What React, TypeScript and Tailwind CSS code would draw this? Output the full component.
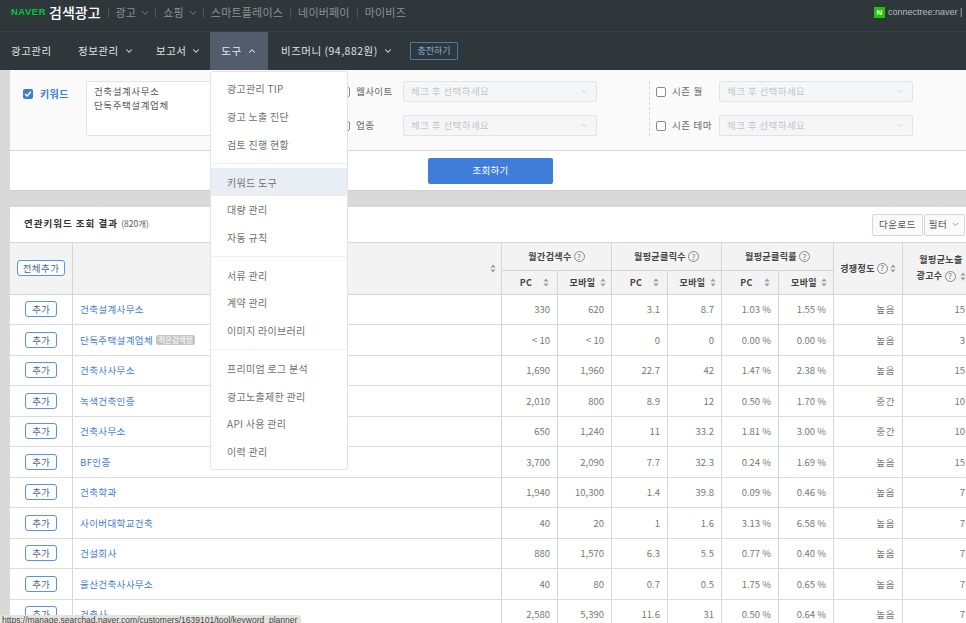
import React from "react";
import { ChevronDown, ChevronUp } from "lucide-react";

const font = { fontFamily: '"Noto Sans CJK KR","Liberation Sans",sans-serif' };

const cols = "grid grid-cols-[63px_429px_56px_54px_56px_54px_57px_55px_69px_80px]";

const rows: [string, string, string, string, string, string, string, string, string][] = [
  ["건축설계사무소", "330", "620", "3.1", "8.7", "1.03 %", "1.55 %", "높음", "15"],
  ["단독주택설계업체", "< 10", "< 10", "0", "0", "0.00 %", "0.00 %", "높음", "3"],
  ["건축사사무소", "1,690", "1,960", "22.7", "42", "1.47 %", "2.38 %", "높음", "15"],
  ["녹색건축인증", "2,010", "800", "8.9", "12", "0.50 %", "1.70 %", "중간", "10"],
  ["건축사무소", "650", "1,240", "11", "33.2", "1.81 %", "3.00 %", "중간", "10"],
  ["BF인증", "3,700", "2,090", "7.7", "32.3", "0.24 %", "1.69 %", "높음", "15"],
  ["건축학과", "1,940", "10,300", "1.4", "39.8", "0.09 %", "0.46 %", "높음", "7"],
  ["사이버대학교건축", "40", "20", "1", "1.6", "3.13 %", "6.58 %", "높음", "7"],
  ["건설회사", "880", "1,570", "6.3", "5.5", "0.77 %", "0.40 %", "높음", "7"],
  ["울산건축사사무소", "40", "80", "0.7", "0.5", "1.75 %", "0.65 %", "높음", "7"],
  ["건축사", "2,580", "5,390", "11.6", "31", "0.50 %", "0.64 %", "높음", "7"],
];

function Sort() {
  return (
    <svg width="6" height="9" viewBox="0 0 6 9" className="shrink-0">
      <path d="M3 0.5 L5.6 3.6 H0.4 Z M3 8.5 L0.4 5.4 H5.6 Z" fill="#9a9fa4" />
    </svg>
  );
}

function Help() {
  return (
    <span className="inline-flex h-[11px] w-[11px] shrink-0 items-center justify-center rounded-full border border-[#8a8a8a] text-[8px] leading-none font-normal text-[#777]">
      ?
    </span>
  );
}

function Check({ on }: { on?: boolean }) {
  return on ? (
    <span className="flex h-[10px] w-[10px] shrink-0 items-center justify-center rounded-[2px] bg-[#3f7ddb]">
      <svg width="8" height="8" viewBox="0 0 8 8">
        <path d="M1.2 4 L3.2 6 L6.8 1.8" stroke="#fff" strokeWidth="1.5" fill="none" />
      </svg>
    </span>
  ) : (
    <span className="h-[10px] w-[10px] shrink-0 rounded-[2px] border border-[#8a8a8a] bg-white" />
  );
}

function Select() {
  return (
    <div className="flex h-[21px] w-[194px] items-center justify-between rounded-[2px] border border-[#e2e3e5] bg-[#f5f6f7] px-[7px] text-[9.5px] tracking-[0.4px] text-[#c4c6c9]">
      <span>체크 후 선택하세요</span>
      <ChevronDown size={9} strokeWidth={1.5} className="text-[#b5b7ba]" />
    </div>
  );
}

function TopLink({ children, caret }: { children: React.ReactNode; caret?: boolean }) {
  return (
    <div className="flex items-center">
      <span className="mr-[7px] h-[10px] w-px bg-[#4a5255]" />
      <span className={`flex items-center gap-[4px] text-[11px] tracking-[0.2px] text-[#8b9194] ${caret ? "pr-[5px]" : "pr-[7px]"}`}>
        {children}
        {caret && <ChevronDown size={10} strokeWidth={2} className="text-[#8b9194]" />}
      </span>
    </div>
  );
}

function NavItem({ children, w, caret }: { children: React.ReactNode; w: string; caret?: boolean }) {
  return (
    <div className={`flex items-center gap-[5px] pb-[1px] text-[10.5px] tracking-[0.5px] text-[#dfe2e3] ${w}`}>
      {children}
      {caret && <ChevronDown size={10} strokeWidth={2.5} className="text-[#dfe2e3]" />}
    </div>
  );
}

function MenuGroup({ items, first, last }: { items: string[]; first?: boolean; last?: boolean }) {
  return (
    <div className={`${first ? "pt-[3.2px]" : "pt-[4.7px]"} ${last ? "pb-[4px]" : "border-b border-[#f0f0f0] pb-[4.7px]"}`}>
      {items.map((t) => (
        <div
          key={t}
          className={`flex h-[27.6px] items-center pl-[16px] text-[10px] tracking-[0.3px] text-[#707070] ${t === "키워드 도구" ? "bg-[#e9edf4]" : ""}`}
        >
          {t}
        </div>
      ))}
    </div>
  );
}

const th = "flex items-center justify-center gap-[2px] border-r border-b border-[#d6d6d6] text-[9px] font-bold tracking-[0.4px] text-[#444]";
const td = "flex items-center justify-end border-r border-[#d6d6d6] pr-[7px] text-[9.5px] text-[#777]";

export default function App() {
  return (
    <div className="relative h-[623px] w-[966px] overflow-hidden bg-[#d9d9d9]" style={font}>
      <header className="flex h-[32px] items-center justify-between border-b border-[#383f42] bg-[#2f373a] pb-[6px] pl-[11px]">
        <div className="flex items-center">
          <span className="w-[34px] whitespace-nowrap text-[9.5px] font-black tracking-[0.5px] text-[#00c73c]" style={{ fontFamily: '"Liberation Sans",sans-serif' }}>
            NAVER
          </span>
          <span className="ml-[4px] mr-[7px] text-[14px] font-medium text-white">검색광고</span>
          <TopLink caret>광고</TopLink>
          <TopLink caret>쇼핑</TopLink>
          <TopLink>스마트플레이스</TopLink>
          <TopLink>네이버페이</TopLink>
          <TopLink>마이비즈</TopLink>
        </div>
        <div className="flex items-center gap-[3px]">
          <span className="flex h-[11px] w-[11px] items-center justify-center bg-[#1ec800] text-[8px] font-black leading-none text-white" style={{ fontFamily: '"Liberation Sans",sans-serif' }}>
            N
          </span>
          <span className="w-[78px] whitespace-nowrap text-[9px] text-[#b9bdbf]" style={{ fontFamily: '"Liberation Sans",sans-serif' }}>
            connectree:naver |
          </span>
        </div>
      </header>

      <nav className="flex h-[38px] items-stretch bg-[#2f373a] pl-[11px]">
        <NavItem w="w-[67px]">광고관리</NavItem>
        <NavItem w="w-[78px]" caret>정보관리</NavItem>
        <NavItem w="w-[54px]" caret>보고서</NavItem>
        <div className="flex w-[58px] items-center justify-center gap-[5px] bg-[#525c6c] pb-[1px] text-[10.5px] tracking-[0.5px] text-[#e6e8ea]">
          도구
          <ChevronUp size={10} strokeWidth={2.5} />
        </div>
        <div className="ml-[13px] flex w-[129px] items-center">
          <NavItem w="" caret>비즈머니 (94,882원)</NavItem>
        </div>
        <div className="flex items-center">
          <span className="flex h-[18px] w-[48px] items-center justify-center rounded-[1px] border border-[#3f7fb0] text-[9px] text-[#7fb0d8]">
            충전하기
          </span>
        </div>
      </nav>

      <main className="ml-[10px]">
        <section className="flex h-[81px] items-start border-b border-[#d4d4d4] bg-[#fafafa] pt-[11px] pl-[13px]">
          <div className="flex items-center pt-[5px]">
            <Check on />
            <span className="ml-[7px] w-[46px] text-[10px] font-bold tracking-[0.4px] text-[#3f7ddb]">키워드</span>
          </div>
          <div className="h-[55px] w-[260px] rounded-[2px] border border-[#e2e3e5] bg-white px-[7px] py-[2px] text-[9.5px] leading-[14px] tracking-[0.6px] text-[#555]">
            건축설계사무소
            <br />
            단독주택설계업체
          </div>
          <div className="ml-[-6px] flex w-[309px] flex-col gap-[13px]">
            {["웹사이트", "업종"].map((t) => (
              <div key={t} className="flex items-center">
                <Check />
                <span className="ml-[6px] w-[47px] text-[9.5px] tracking-[0.4px] text-[#666]">{t}</span>
                <Select />
              </div>
            ))}
          </div>
          <div className="flex h-[55px] flex-col gap-[13px] border-l border-dashed border-[#d6d6d6] pl-[6px]">
            {["시즌 월", "시즌 테마"].map((t) => (
              <div key={t} className="flex items-center">
                <Check />
                <span className="ml-[6px] w-[47px] whitespace-nowrap text-[9.5px] tracking-[0.6px] text-[#666]">{t}</span>
                <Select />
              </div>
            ))}
          </div>
        </section>

        <section className="flex h-[40px] items-center justify-center border-b border-[#cfcfcf] bg-white">
          <button className="ml-[5px] h-[26px] w-[125px] rounded-[2px] bg-[#3f7ddb] text-[9.5px] tracking-[0.3px] text-white">
            조회하기
          </button>
        </section>

        <section className="mt-[16px] bg-white">
          <div className="flex h-[36px] items-center justify-between border-b border-[#d6d6d6] pl-[14px] pr-[1px]">
            <div className="pb-[2px] text-[9.5px] font-bold tracking-[1px] text-[#333]">
              연관키워드 조회 결과 <span className="font-normal tracking-normal text-[#555] text-[8.5px]">(820개)</span>
            </div>
            <div className="flex gap-[1px]">
              <span className="flex h-[22px] w-[51px] items-center justify-center rounded-[2px] border border-[#d6d6d6] bg-[#fafafa] text-[9.5px] tracking-[0.5px] text-[#555]">
                다운로드
              </span>
              <span className="flex h-[22px] w-[41px] items-center justify-center gap-[4px] rounded-[2px] border border-[#d6d6d6] bg-[#fafafa] text-[9.5px] tracking-[0.5px] text-[#555]">
                필터 <ChevronDown size={9} strokeWidth={1.5} />
              </span>
            </div>
          </div>

          <div className={`${cols} grid-rows-[28px_23.5px] bg-[#f3f3f3]`}>
            <div className={`${th} row-span-2`}>
              <span className="flex h-[16px] w-[48px] items-center justify-center rounded-[3px] border border-[#5a93e0] bg-white text-[9.5px] font-normal text-[#4a6a95]">
                전체추가
              </span>
            </div>
            <div className={`${th} row-span-2 justify-end pr-[5px]`}>
              <Sort />
            </div>
            <div className={`${th} col-span-2`}>월간검색수 <Help /></div>
            <div className={`${th} col-span-2`}>월평균클릭수 <Help /></div>
            <div className={`${th} col-span-2`}>월평균클릭률 <Help /></div>
            <div className={`${th} row-span-2`}>경쟁정도 <Help /><Sort /></div>
            <div className={`${th} row-span-2 justify-start pl-[12px] leading-[16px]`}>
              <div className="w-[52px] text-center">
                월평균노출
                <div className="flex items-center justify-center gap-[2px] whitespace-nowrap">광고수 <Help /> <span className="ml-[2px]"><Sort /></span></div>
              </div>
            </div>
            {["PC", "모바일", "PC", "모바일", "PC", "모바일"].map((t, i) => (
              <div key={i} className={`${th} ${t === "PC" ? "gap-[11px] pl-[10px]" : "gap-[4px] pl-[6px]"}`}>
                {t} <Sort />
              </div>
            ))}
          </div>

          {rows.map((r, i) => (
            <div key={i} className={`${cols} h-[30.5px] border-b border-[#dcdcdc]`}>
              <div className="flex items-center justify-center border-r border-[#d6d6d6]">
                <span className="flex h-[16px] w-[32px] items-center justify-center rounded-[3px] border border-[#5a93e0] bg-white text-[9.5px] text-[#4a6a95]">
                  추가
                </span>
              </div>
              <div className="flex items-center gap-[3px] border-r border-[#d6d6d6] pl-[7px] text-[9.5px] tracking-[0.4px] text-[#3f7ddb]">
                {r[0]}
                {i === 1 && (
                  <span className="rounded-[2px] bg-[#c4c6c8] px-[2px] text-[7.5px] leading-[10px] tracking-normal text-white">적은검색량</span>
                )}
              </div>
              {r.slice(1, 7).map((v, j) => (
                <div key={j} className={td}>{v}</div>
              ))}
              <div className={`${td} justify-center pr-0 tracking-[0.6px]`}>{r[7]}</div>
              <div className="flex w-[63px] items-center justify-end pr-[1px] text-[9.5px] text-[#777]">{r[8]}</div>
            </div>
          ))}
        </section>
      </main>

      <div className="absolute left-[210px] top-[71px] z-10 w-[138px] rounded-[3px] border border-[#e3e3e3] bg-white">
        <MenuGroup first items={["광고관리 TIP", "광고 노출 진단", "검토 진행 현황"]} />
        <MenuGroup items={["키워드 도구", "대량 관리", "자동 규칙"]} />
        <MenuGroup items={["서류 관리", "계약 관리", "이미지 라이브러리"]} />
        <MenuGroup last items={["프리미엄 로그 분석", "광고노출제한 관리", "API 사용 관리", "이력 관리"]} />
      </div>

      <div className="absolute bottom-0 left-0 z-20 h-[8px] w-[301px] overflow-hidden whitespace-nowrap rounded-tr-[3px] bg-[#e6e2de] pl-[2px] text-[8.5px] leading-[10px] text-[#444]" style={{ fontFamily: '"Liberation Sans",sans-serif' }}>
        https://manage.searchad.naver.com/customers/1639101/tool/keyword_planner
      </div>
    </div>
  );
}
